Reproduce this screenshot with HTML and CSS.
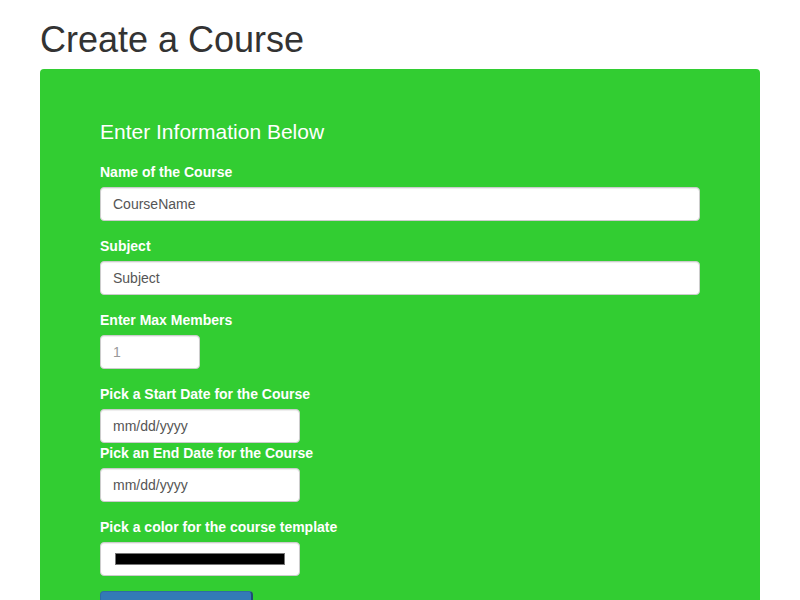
FILE: index.html
```html
<!DOCTYPE html>
<html>
<head>
<meta charset="utf-8">
<link rel="stylesheet" href="styles.css">
</head>
<body>
<div class="container">
  <h1 class="title">Create a Course</h1>
  <div class="panel">
    <h3 class="panel-heading">Enter Information Below</h3>
    <form class="form">
      <div class="form-group">
        <label class="label">Name of the Course</label>
        <input class="control full" type="text" value="CourseName">
      </div>
      <div class="form-group">
        <label class="label">Subject</label>
        <input class="control full" type="text" value="Subject">
      </div>
      <div class="form-group">
        <label class="label">Enter Max Members</label>
        <input class="control small" type="text" placeholder="1">
      </div>
      <div class="form-group tight">
        <label class="label">Pick a Start Date for the Course</label>
        <input class="control medium" type="text" value="mm/dd/yyyy">
      </div>
      <div class="form-group">
        <label class="label">Pick an End Date for the Course</label>
        <input class="control medium" type="text" value="mm/dd/yyyy">
      </div>
      <div class="form-group">
        <label class="label">Pick a color for the course template</label>
        <div class="control medium color-box"><span class="swatch"></span></div>
      </div>
      <button class="btn" type="button" aria-label="Create Course"></button>
    </form>
  </div>
</div>
</body>
</html>
```
FILE: styles.css
```css
* { box-sizing: border-box; }
html, body {
  margin: 0;
  padding: 0;
  background: #fff;
  font-family: "Liberation Sans", Arial, sans-serif;
  font-size: 14px;
  line-height: 1.42857;
  color: #333;
}
.container {
  width: 750px;
  margin: 0 auto;
  padding: 0 15px;
}
.title {
  font-size: 36px;
  font-weight: 500;
  line-height: 1.1;
  margin: 20px 0 9px;
  color: #333;
}
.panel {
  background: #32cd32;
  border-radius: 4px;
  padding: 52px 60px 60px;
  min-height: 600px;
}
.panel-heading {
  margin: 0 0 19px;
  font-size: 21px;
  font-weight: 500;
  line-height: 22px;
  color: #fff;
}
.form-group {
  margin-bottom: 15px;
}
.form-group.tight {
  margin-bottom: 0;
}
.label {
  display: block;
  font-weight: bold;
  color: #fff;
  margin-bottom: 5px;
  line-height: 20px;
}
.control {
  display: block;
  height: 34px;
  padding: 6px 12px;
  font-family: "Liberation Sans", Arial, sans-serif;
  font-size: 14px;
  line-height: 1.42857;
  color: #555;
  background: #fff;
  border: 1px solid #ccc;
  border-radius: 4px;
  box-shadow: inset 0 1px 1px rgba(0,0,0,0.075);
  margin: 0;
}
.control::placeholder { color: #999; }
.full { width: 600px; }
.small { width: 100px; }
.medium { width: 200px; }
.color-box {
  display: flex;
  align-items: center;
  padding: 0 14px;
}
.swatch {
  display: block;
  width: 170px;
  height: 12px;
  background: #000;
  border: 1px solid #777;
}
.btn {
  display: block;
  width: 153px;
  height: 34px;
  padding: 6px 12px;
  font-family: "Liberation Sans", Arial, sans-serif;
  font-size: 14px;
  color: #fff;
  background: #337ab7;
  border: 1px solid #2e6da4;
  border-right: 2px solid #204d74;
  border-bottom: 2px solid #204d74;
  border-radius: 4px;
  margin-top: 0;
}
```
